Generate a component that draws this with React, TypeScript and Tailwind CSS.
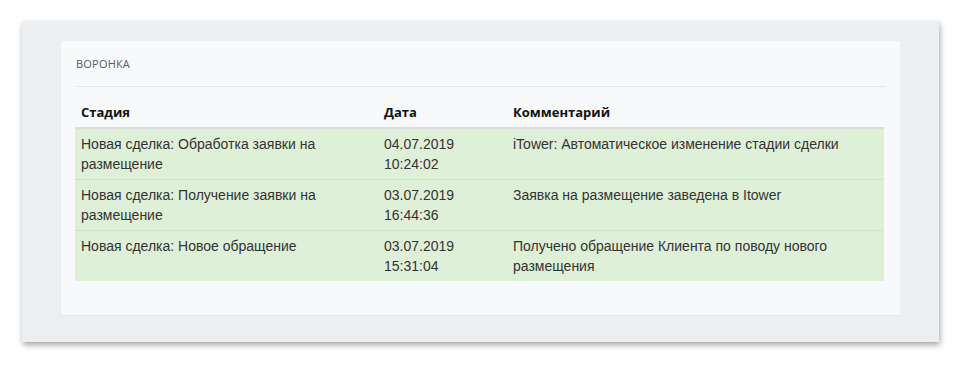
const rows = [
  {
    stage: "Новая сделка: Обработка заявки на размещение",
    date: "04.07.2019",
    time: "10:24:02",
    comment: "iTower: Автоматическое изменение стадии сделки",
  },
  {
    stage: "Новая сделка: Получение заявки на размещение",
    date: "03.07.2019",
    time: "16:44:36",
    comment: "Заявка на размещение заведена в Itower",
  },
  {
    stage: "Новая сделка: Новое обращение",
    date: "03.07.2019",
    time: "15:31:04",
    comment: "Получено обращение Клиента по поводу нового размещения",
  },
];

export default function App() {
  return (
    <div className="min-h-[387px] bg-white pt-[21px] pl-[22px] font-[Liberation_Sans,Arial,sans-serif]">
      {/* Outer panel */}
      <div className="w-[917px] h-[321px] bg-[#eceff2] shadow-[1px_3px_6px_rgba(0,0,0,0.35)] pt-[20px] pl-[39px]">
        {/* Card */}
        <div className="w-[839px] h-[275px] bg-[#f8f9fb] border-b border-[#e3e6ea] px-[14px] pt-[15px]">
          <div className="px-px text-[11px] leading-[16px] text-[#555b63] font-[Open_Sans,sans-serif] tracking-[0.2px]">
            ВОРОНКА
          </div>
          <div className="mt-[14px] h-px bg-[#e4e7ea] ml-px" />
          <table className="mt-[10px] w-[809px] table-fixed border-collapse text-[14px] leading-[20px]">
            <colgroup>
              <col className="w-[303px]" />
              <col className="w-[129px]" />
              <col />
            </colgroup>
            <thead>
              <tr className="border-b-2 border-[#dddddd]">
                <th className="text-left font-bold text-[#111] px-[6px] py-[5px] font-[Open_Sans,sans-serif] text-[13px]">
                  Стадия
                </th>
                <th className="text-left font-bold text-[#111] px-[6px] py-[5px] font-[Open_Sans,sans-serif] text-[13px]">
                  Дата
                </th>
                <th className="text-left font-bold text-[#111] px-[6px] py-[5px] font-[Open_Sans,sans-serif] text-[13px]">
                  Комментарий
                </th>
              </tr>
            </thead>
            <tbody>
              {rows.map((r, i) => (
                <tr
                  key={i}
                  className={`bg-[#dff0d8] text-[#333] ${i > 0 ? "border-t border-[#d3e0cd]" : ""}`}
                >
                  <td className="align-top px-[6px] py-[5px]">{r.stage}</td>
                  <td className="align-top px-[6px] py-[5px]">
                    {r.date}
                    <br />
                    {r.time}
                  </td>
                  <td className="align-top px-[6px] py-[5px] h-[50px] pr-[40px]">{r.comment}</td>
                </tr>
              ))}
            </tbody>
          </table>
        </div>
      </div>
    </div>
  );
}
